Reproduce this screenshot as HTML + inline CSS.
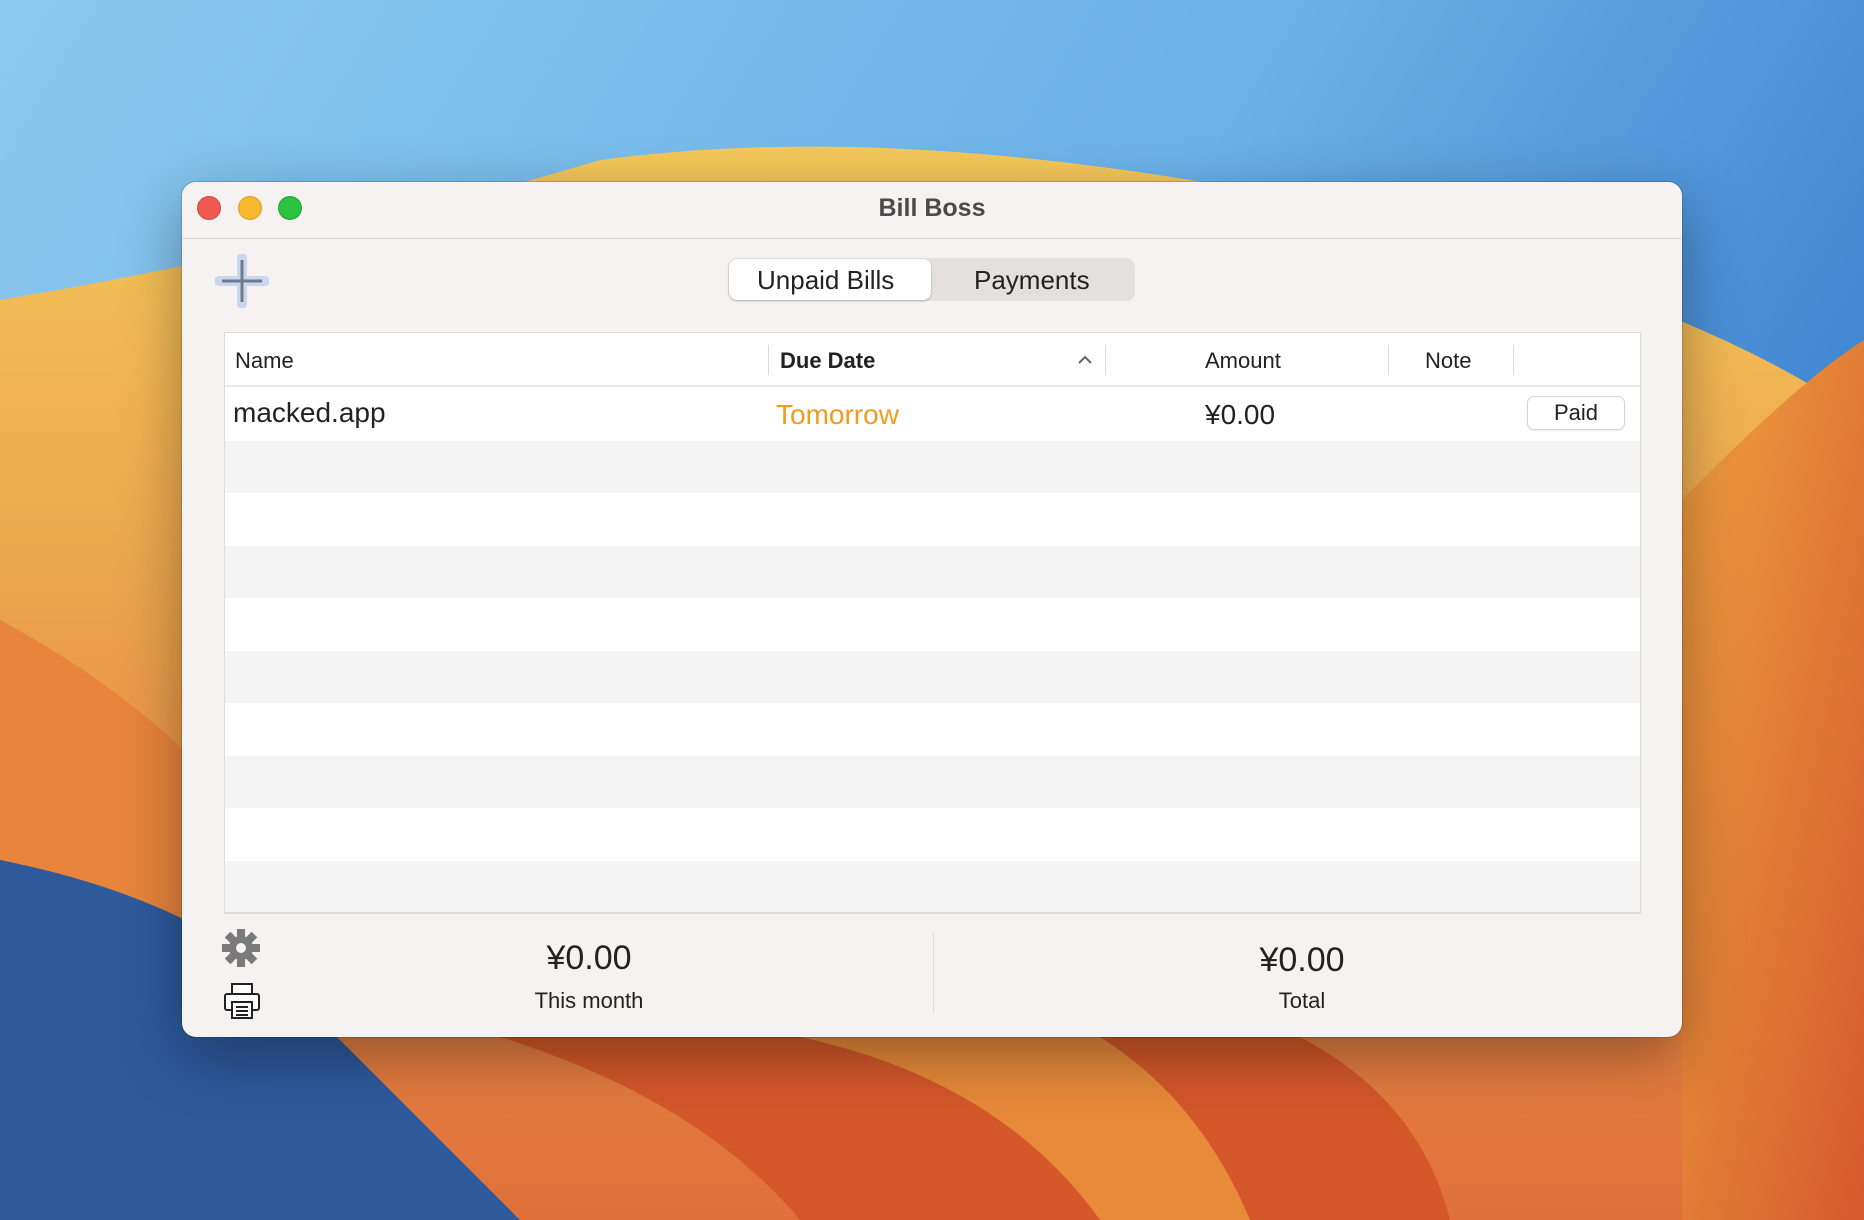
<!DOCTYPE html>
<html><head><meta charset="utf-8"><style>
*{margin:0;padding:0;box-sizing:border-box}
body{width:1864px;height:1220px;overflow:hidden;position:relative;font-family:"Liberation Sans",sans-serif;background:#4a8fd6}
.bg{position:absolute;inset:0}
.win{position:absolute;left:182px;top:182px;width:1500px;height:855px;background:#f6f2f1;border-radius:14px;box-shadow:0 20px 60px rgba(0,0,0,.35),0 0 0 1px rgba(0,0,0,.15);overflow:hidden}
.title{position:absolute;left:0;top:0;right:0;height:57px;border-bottom:1px solid #d8d4d3;background:#f6f2f1}
.title span{position:absolute;left:0;right:0;top:12px;text-align:center;font-weight:bold;font-size:25px;color:#4a4a4a}
.tl{position:absolute;top:14px;width:24px;height:24px;border-radius:50%}
.seg{position:absolute;left:546px;top:76px;width:407px;height:43px;background:#e4e0df;border-radius:9px}
.seg .on{position:absolute;left:1px;top:1px;width:202px;height:41px;background:#fff;border-radius:8px;box-shadow:0 1px 2px rgba(0,0,0,.25)}
.seg span{position:absolute;top:7px;font-size:26px;color:#222}
.table{position:absolute;left:42px;top:150px;width:1417px;height:582px;background:#fff;border:1px solid #dcdcdc;border-bottom:2px solid #dcdcdc;overflow:hidden}
.hdr{position:absolute;left:0;top:0;right:0;height:54px;border-bottom:2px solid #e6e6e6;font-size:22px;color:#222}
.hdr span{position:absolute;top:15px}
.sep{position:absolute;top:12px;width:1px;height:30px;background:#ddd}
.row{position:absolute;left:0;right:0;height:52.5px}
.g{background:#f4f4f4}
.foot{position:absolute;font-size:34px;color:#222;text-align:center;width:300px}
.lbl{position:absolute;font-size:22px;color:#222;text-align:center;width:300px}
</style></head><body>
<svg class="bg" width="1864" height="1220" viewBox="0 0 1864 1220">
<defs>
<linearGradient id="sky" x1="0" y1="0" x2="1" y2="0.4"><stop offset="0" stop-color="#8cc8ee"/><stop offset="0.6" stop-color="#6ab2e8"/><stop offset="1" stop-color="#3d82d0"/></linearGradient>
<linearGradient id="o1" x1="0" y1="0" x2="0" y2="1"><stop offset="0" stop-color="#f4c85a"/><stop offset="1" stop-color="#e0703a"/></linearGradient>
<linearGradient id="o2" x1="0" y1="0" x2="1" y2="1"><stop offset="0" stop-color="#f0a040"/><stop offset="1" stop-color="#d45a2c"/></linearGradient>
</defs>
<rect width="1864" height="1220" fill="url(#sky)"/>
<path d="M0 300 Q300 250 600 160 Q900 120 1300 200 Q1700 300 1864 420 L1864 1220 L0 1220Z" fill="url(#o1)"/>
<path d="M0 620 Q150 700 250 820 L250 1220 L0 1220Z" fill="#e8843c"/>
<path d="M1682 500 Q1800 380 1864 340 L1864 1220 L1682 1220Z" fill="url(#o2)"/>
<path d="M0 860 Q200 900 300 1000 Q420 1120 520 1220 L0 1220Z" fill="#2e5a9c"/>
<path d="M500 1037 Q700 1100 800 1220 L1450 1220 Q1420 1100 1300 1037Z" fill="#d4582a"/>
<path d="M800 1037 Q1000 1080 1100 1220 L1250 1220 Q1200 1100 1100 1037Z" fill="#e88a3a"/>
</svg>
<div class="win">
<div class="title">
<div class="tl" style="left:15px;background:#ee5a52;border:1px solid #d4463f"></div>
<div class="tl" style="left:56px;background:#f6b92e;border:1px solid #dc9f22"></div>
<div class="tl" style="left:96px;background:#2bc33e;border:1px solid #22a532"></div>
<span>Bill Boss</span></div>
<svg style="position:absolute;left:33px;top:72px" width="54" height="54" viewBox="0 0 54 54">
<path d="M27 4v46M4 27h46" stroke="#c9d6ee" stroke-width="10" stroke-linecap="round"/>
<path d="M27 6v42M7 27h40" stroke="#6d7a8f" stroke-width="3"/></svg>
<div class="seg"><div class="on"></div><span style="left:29px">Unpaid Bills</span><span style="left:246px">Payments</span></div>
<div class="table">
<div class="hdr"><span style="left:10px">Name</span><div class="sep" style="left:543px"></div>
<span style="left:555px;font-weight:bold">Due Date</span>
<svg style="position:absolute;left:852px;top:21px" width="16" height="12" viewBox="0 0 16 12"><path d="M2 9l6-6 6 6" stroke="#666" stroke-width="2" fill="none"/></svg>
<div class="sep" style="left:880px"></div>
<span style="left:980px">Amount</span><div class="sep" style="left:1163px"></div>
<span style="left:1200px">Note</span><div class="sep" style="left:1288px"></div>
</div>
<div class="row" style="top:55px"><span style="position:absolute;left:8px;top:9px;font-size:28px;color:#222">macked.app</span>
<span style="position:absolute;left:551px;top:11px;font-size:28px;color:#f29a1c">Tomorrow</span>
<span style="position:absolute;left:980px;top:11px;font-size:28px;color:#222">¥0.00</span>
<div style="position:absolute;left:1303px;top:9px;width:96px;height:32px;background:#fff;border-radius:6px;box-shadow:0 0 0 1px #d4d4d4,0 1px 2px rgba(0,0,0,.2);font-size:22px;text-align:center;line-height:32px;color:#222">Paid</div></div>
<div class="row g" style="top:107.5px"></div>
<div class="row g" style="top:212.5px"></div>
<div class="row g" style="top:317.5px"></div>
<div class="row g" style="top:422.5px"></div>
<div class="row g" style="top:527.5px;height:60px"></div>
</div>
<svg style="position:absolute;left:40px;top:747px" width="38" height="38" viewBox="0 0 38 38"><g fill="#7a7a7a" transform="translate(19 19)">
<circle r="12"/><g id="t"><rect x="-4" y="-19" width="8" height="9"/></g>
<use href="#t" transform="rotate(45)"/><use href="#t" transform="rotate(90)"/><use href="#t" transform="rotate(135)"/><use href="#t" transform="rotate(180)"/><use href="#t" transform="rotate(225)"/><use href="#t" transform="rotate(270)"/><use href="#t" transform="rotate(315)"/></g>
<circle cx="19" cy="19" r="5" fill="#f6f2f1"/></svg>
<svg style="position:absolute;left:41px;top:800px" width="38" height="38" viewBox="0 0 38 38" fill="none" stroke="#222" stroke-width="2">
<rect x="9" y="2" width="20" height="11" fill="#fff"/><rect x="2" y="12" width="34" height="16" rx="2" fill="#fff"/><rect x="9" y="20" width="20" height="16" fill="#fff"/><path d="M13 25h12M13 29h12M13 33h12"/></svg>
<div class="foot" style="left:257px;top:757px">¥0.00</div>
<div class="lbl" style="left:257px;top:806px">This month</div>
<div style="position:absolute;left:751px;top:751px;width:1px;height:80px;background:#ddd"></div>
<div class="foot" style="left:970px;top:759px">¥0.00</div>
<div class="lbl" style="left:970px;top:806px">Total</div>
</div>
</body></html>
